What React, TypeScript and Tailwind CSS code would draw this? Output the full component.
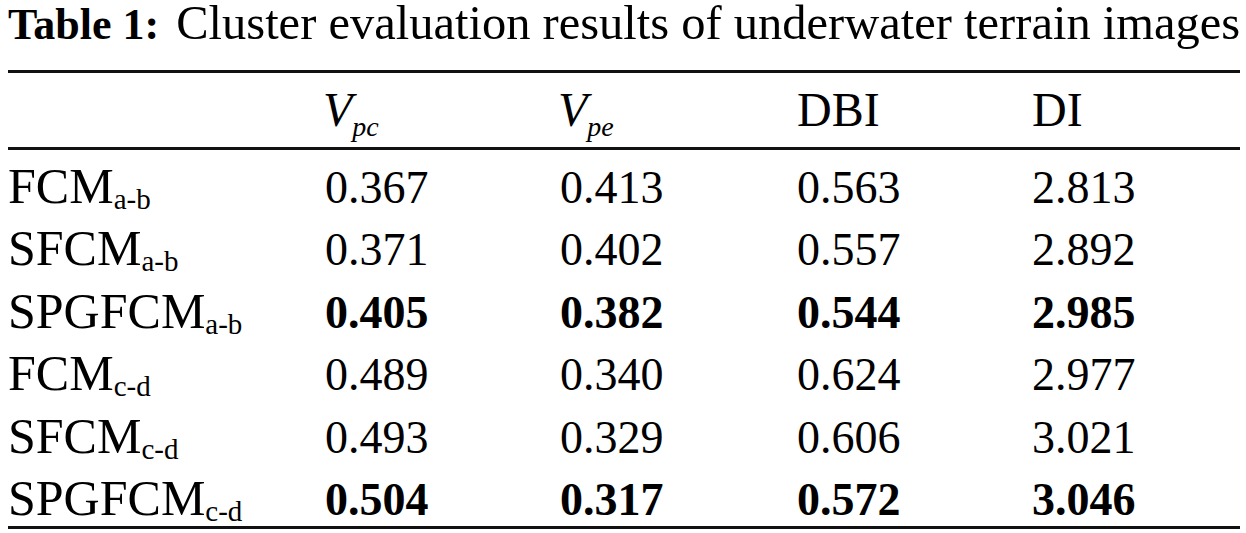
import React from 'react';

type Row = {
  name: string;
  sub: string;
  values: string[];
  best?: boolean;
};

const rows: Row[] = [
  { name: 'FCM', sub: 'a-b', values: ['0.367', '0.413', '0.563', '2.813'] },
  { name: 'SFCM', sub: 'a-b', values: ['0.371', '0.402', '0.557', '2.892'] },
  { name: 'SPGFCM', sub: 'a-b', values: ['0.405', '0.382', '0.544', '2.985'], best: true },
  { name: 'FCM', sub: 'c-d', values: ['0.489', '0.340', '0.624', '2.977'] },
  { name: 'SFCM', sub: 'c-d', values: ['0.493', '0.329', '0.606', '3.021'] },
  { name: 'SPGFCM', sub: 'c-d', values: ['0.504', '0.317', '0.572', '3.046'], best: true },
];

const cols = 'grid grid-cols-[317px_235px_237px_235px_1fr] items-baseline';

const App = () => {
  return (
    <div className="w-[1246px] h-[533px] bg-white text-black font-['Liberation_Serif','Times_New_Roman',serif] overflow-hidden">
      <div className="pl-[8px] pr-[6px]">
        <h1 className="h-[43px] pt-[2px] leading-[41px] whitespace-nowrap font-normal text-[48.5px]">
          <span className="font-bold text-[44px]">Table 1:</span>
          <span className="ml-[17px]">Cluster evaluation results of underwater terrain images</span>
        </h1>

        <div className="mt-[27px] border-t-[3px] border-[#111]">
          {/* header */}
          <div className={`${cols} h-[77px] leading-[74px] text-[48px] border-b-[3px] border-[#111]`}>
            <div />
            <div className="-ml-[2px]">
              <i>V</i>
              <sub className="text-[28px] italic relative top-[10px] align-baseline leading-none">pc</sub>
            </div>
            <div className="-ml-[2px]">
              <i>V</i>
              <sub className="text-[28px] italic relative top-[10px] align-baseline leading-none">pe</sub>
            </div>
            <div>DBI</div>
            <div>DI</div>
          </div>

          {/* body */}
          <div className="h-[379px] pt-[5px] border-b-[3px] border-[#111]">
            {rows.map((r, i) => (
              <div key={i} className={`${cols} h-[62.4px] leading-[62.4px]`}>
                <div className="whitespace-nowrap text-[50px]">
                  {r.name}
                  <sub className="text-[29px] relative top-[6px] align-baseline leading-none">{r.sub}</sub>
                </div>
                {r.values.map((v, j) => (
                  <div key={j} className={`text-[46px] ${r.best ? 'font-bold' : ''}`}>
                    {v}
                  </div>
                ))}
              </div>
            ))}
          </div>
        </div>
      </div>
    </div>
  );
};

export default App;
